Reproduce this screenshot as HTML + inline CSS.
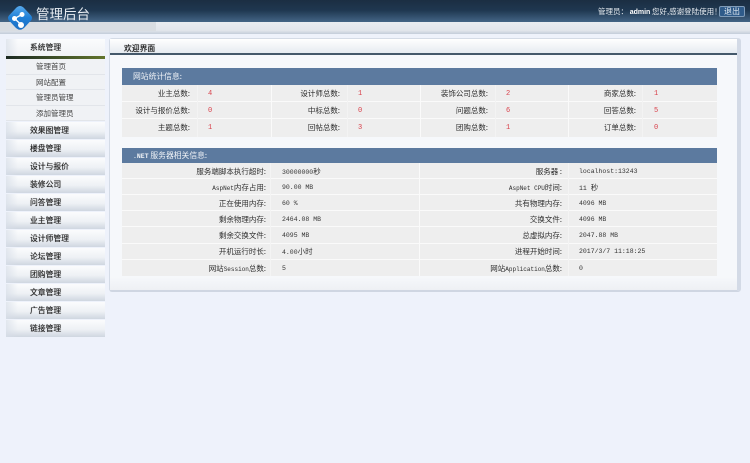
<!DOCTYPE html>
<html><head><meta charset="utf-8"><style>
*{margin:0;padding:0;box-sizing:border-box}
html,body{width:750px;height:463px;overflow:hidden;background:#eef2fb}
body{position:relative;font:7.500px "WenQuanYi Zen Hei","Noto Sans CJK SC",sans-serif;color:#2e2e2e}
div{position:absolute}
i{font:6px "Liberation Mono",monospace}
.t{white-space:nowrap;line-height:12px;filter:blur(.2px)}
.d{font:6.500px "Liberation Mono","WenQuanYi Zen Hei",monospace;line-height:12px;white-space:nowrap;filter:blur(.2px);color:#333}
.d b{font:normal 7.500px "WenQuanYi Zen Hei",sans-serif}
.r{text-align:right}
.m{left:6px;width:99px;height:17px;background:linear-gradient(90deg,rgba(215,222,232,.7),rgba(255,255,255,0) 12px),linear-gradient(#fbfcfd,#eef1f5 55%,#cfd6e0)}
.m span{position:absolute;left:24px;top:3px;font-size:7.800px;line-height:12px;color:#222;white-space:nowrap;filter:blur(.2px);text-shadow:0 0 .6px #444}
.s{left:6px;width:99px;height:15.500px;background:#f0f2f5;border-bottom:1px solid #e2e5ea}
.s span{position:absolute;left:30px;top:2px;line-height:12px;color:#444;white-space:nowrap;filter:blur(.2px)}
.bar{left:122px;width:595px;background:#5c7a9f}
.bar span{position:absolute;left:11px;color:#f0f3f7;font-size:7.800px;line-height:12px;white-space:nowrap;filter:blur(.2px)}
.row{left:122px;width:595px;background:#eeeeee;border-bottom:1px solid #fafafa}
.val{color:#d8404a;font:7px "Liberation Mono",monospace;line-height:12px;position:absolute;filter:blur(.2px)}
</style></head><body>
<div style="left:0;top:0;width:750px;height:23px;background:linear-gradient(#1b2e42,#1f3750 45%,#47698a)"></div>
<div style="left:0;top:22px;width:750px;height:12px;background:linear-gradient(#eaedf1,#e2e6ec 70%,#c3ccd9)"></div>
<div style="left:0;top:22px;width:156px;height:9px;background:#d9dde2"></div>
<svg style="position:absolute;left:7px;top:5px" width="26" height="26" viewBox="0 0 26 26"><defs><linearGradient id="g" x1="0" y1="0" x2="0" y2="1"><stop offset="0" stop-color="#57a9ec"/><stop offset=".5" stop-color="#1f7fd6"/><stop offset="1" stop-color="#1c6fc4"/></linearGradient></defs><path d="M13 1 Q15 1 17 3 L24 10.500 Q26 13 24 15.500 L17 23 Q13 26.500 9 23 L2 15.500 Q0 13 2 10.500 L9 3 Q11 1 13 1Z" fill="url(#g)"/><path d="M15 9.500 L7.500 13.500 L14 19.500" stroke="#fff" stroke-width="1.300" fill="none"/><circle cx="15" cy="9.500" r="2.500" fill="#fff"/><circle cx="7.500" cy="13.500" r="2.500" fill="#fff"/><circle cx="14" cy="20" r="3" fill="#fff"/></svg>
<div class="t" style="left:36px;top:5px;font-size:13.500px;line-height:17px;color:#e8edf2">管理后台</div>
<div class="t" style="left:598px;top:6px;color:#e6ebf0;font-size:7.500px">管理员： <b style="color:#fff;font:bold 7px 'Liberation Sans',sans-serif">admin</b> 您好,感谢登陆使用！</div>
<div style="left:719px;top:6px;width:26px;height:11px;background:#2f5b8a;border:1px solid #7f9bb8;border-radius:2px"></div>
<div class="t" style="left:724px;top:6px;color:#dfe7ef;font-size:8px">退出</div>

<div class="m" style="top:39px;background:linear-gradient(90deg,rgba(215,222,232,.7),rgba(255,255,255,0) 12px),linear-gradient(#fbfcfd,#f0f2f5)"><span>系统管理</span></div>
<div style="left:6px;top:56px;width:99px;height:3px;background:linear-gradient(90deg,#1c2a22,#3e4f28 50%,#62742c)"></div>
<div class="s" style="top:59px"><span style="left:30px">管理首页</span></div>
<div class="s" style="top:74.500px"><span>网站配置</span></div>
<div class="s" style="top:90px"><span>管理员管理</span></div>
<div class="s" style="top:105.500px"><span>添加管理员</span></div>
<div class="m" style="top:122px"><span>效果图管理</span></div>
<div class="m" style="top:140px"><span>楼盘管理</span></div>
<div class="m" style="top:158px"><span>设计与报价</span></div>
<div class="m" style="top:176px"><span>装修公司</span></div>
<div class="m" style="top:194px"><span>问答管理</span></div>
<div class="m" style="top:212px"><span>业主管理</span></div>
<div class="m" style="top:230px"><span>设计师管理</span></div>
<div class="m" style="top:248px"><span>论坛管理</span></div>
<div class="m" style="top:266px"><span>团购管理</span></div>
<div class="m" style="top:284px"><span>文章管理</span></div>
<div class="m" style="top:302px"><span>广告管理</span></div>
<div class="m" style="top:320px"><span>链接管理</span></div>

<div style="left:109px;top:38px;width:632px;height:254px;background:#f6f8fb;border:1px solid #d4dbe6;border-right:4px solid #d3dae6;border-bottom:2px solid #cfd6e2;border-radius:3px"></div>
<div style="left:110px;top:39px;width:627px;height:16px;background:linear-gradient(#fff,#e6ebf1);border-bottom:2px solid #44586a"></div>
<div style="left:110px;top:277px;width:627px;height:13px;background:linear-gradient(#f6f8fb,#eef0f4)"></div>
<div class="t" style="left:124px;top:43px;font-size:7.800px;color:#111;text-shadow:0 0 .6px #333">欢迎界面</div>

<div class="bar" style="top:68px;height:17px"><span style="top:3px">网站统计信息:</span></div>
<div class="row" style="top:85px;height:17px"></div>
<div class="row" style="top:102px;height:17px"></div>
<div class="row" style="top:119px;height:18px;border:0"></div>
<div style="left:271px;top:85px;width:1px;height:52px;background:#fafafa"></div>
<div style="left:420px;top:85px;width:1px;height:52px;background:#fafafa"></div>
<div style="left:568px;top:85px;width:1px;height:52px;background:#fafafa"></div>
<div style="left:197px;top:85px;width:1px;height:52px;background:#f3f3f3"></div>
<div style="left:347px;top:85px;width:1px;height:52px;background:#f3f3f3"></div>
<div style="left:495px;top:85px;width:1px;height:52px;background:#f3f3f3"></div>
<div style="left:642px;top:85px;width:1px;height:52px;background:#f3f3f3"></div>

<div class="t r" style="right:560px;top:88px">业主总数:</div><div class="val" style="left:208px;top:88px">4</div>
<div class="t r" style="right:410px;top:88px">设计师总数:</div><div class="val" style="left:358px;top:88px">1</div>
<div class="t r" style="right:262px;top:88px">装饰公司总数:</div><div class="val" style="left:506px;top:88px">2</div>
<div class="t r" style="right:114px;top:88px">商家总数:</div><div class="val" style="left:654px;top:88px">1</div>

<div class="t r" style="right:560px;top:105px">设计与报价总数:</div><div class="val" style="left:208px;top:105px">0</div>
<div class="t r" style="right:410px;top:105px">中标总数:</div><div class="val" style="left:358px;top:105px">0</div>
<div class="t r" style="right:262px;top:105px">问题总数:</div><div class="val" style="left:506px;top:105px">6</div>
<div class="t r" style="right:114px;top:105px">回答总数:</div><div class="val" style="left:654px;top:105px">5</div>

<div class="t r" style="right:560px;top:122px">主题总数:</div><div class="val" style="left:208px;top:122px">1</div>
<div class="t r" style="right:410px;top:122px">回帖总数:</div><div class="val" style="left:358px;top:122px">3</div>
<div class="t r" style="right:262px;top:122px">团购总数:</div><div class="val" style="left:506px;top:122px">1</div>
<div class="t r" style="right:114px;top:122px">订单总数:</div><div class="val" style="left:654px;top:122px">0</div>

<div class="bar" style="top:148px;height:15px"><span style="top:2px;left:11px"><i style="font-weight:bold;font-size:6.500px">.NET</i> 服务器相关信息:</span></div>
<div class="row" style="top:163px;height:16px"></div>
<div class="row" style="top:179px;height:16px"></div>
<div class="row" style="top:195px;height:16px"></div>
<div class="row" style="top:211px;height:16px"></div>
<div class="row" style="top:227px;height:17px"></div>
<div class="row" style="top:244px;height:16px"></div>
<div class="row" style="top:260px;height:16px;border:0"></div>
<div style="left:419px;top:163px;width:1px;height:113px;background:#fafafa"></div>
<div style="left:270px;top:163px;width:1px;height:113px;background:#f4f4f4"></div>
<div style="left:568px;top:163px;width:1px;height:113px;background:#f4f4f4"></div>

<div class="t r" style="right:484px;top:166px">服务端脚本执行超时:</div><div class="d" style="left:282px;top:166px">30000000<b>秒</b></div>
<div class="t r" style="right:188px;top:166px">服务器 :</div><div class="d" style="left:579px;top:166px">localhost:13243</div>

<div class="t r" style="right:484px;top:182px"><i>AspNet</i>内存占用:</div><div class="d" style="left:282px;top:182px">90.00 MB</div>
<div class="t r" style="right:188px;top:182px"><i>AspNet CPU</i>时间:</div><div class="d" style="left:579px;top:182px">11 <b>秒</b></div>

<div class="t r" style="right:484px;top:198px">正在使用内存:</div><div class="d" style="left:282px;top:198px">60 %</div>
<div class="t r" style="right:188px;top:198px">共有物理内存:</div><div class="d" style="left:579px;top:198px">4096 MB</div>

<div class="t r" style="right:484px;top:214px">剩余物理内存:</div><div class="d" style="left:282px;top:214px">2464.08 MB</div>
<div class="t r" style="right:188px;top:214px">交换文件:</div><div class="d" style="left:579px;top:214px">4096 MB</div>

<div class="t r" style="right:484px;top:230px">剩余交换文件:</div><div class="d" style="left:282px;top:230px">4095 MB</div>
<div class="t r" style="right:188px;top:230px">总虚拟内存:</div><div class="d" style="left:579px;top:230px">2047.88 MB</div>

<div class="t r" style="right:484px;top:246px">开机运行时长:</div><div class="d" style="left:282px;top:246px">4.00<b>小时</b></div>
<div class="t r" style="right:188px;top:246px">进程开始时间:</div><div class="d" style="left:579px;top:246px">2017/3/7 11:18:25</div>

<div class="t r" style="right:484px;top:263px">网站<i>Session</i>总数:</div><div class="d" style="left:282px;top:263px">5</div>
<div class="t r" style="right:188px;top:263px">网站<i>Application</i>总数:</div><div class="d" style="left:579px;top:263px">0</div>
</body></html>
